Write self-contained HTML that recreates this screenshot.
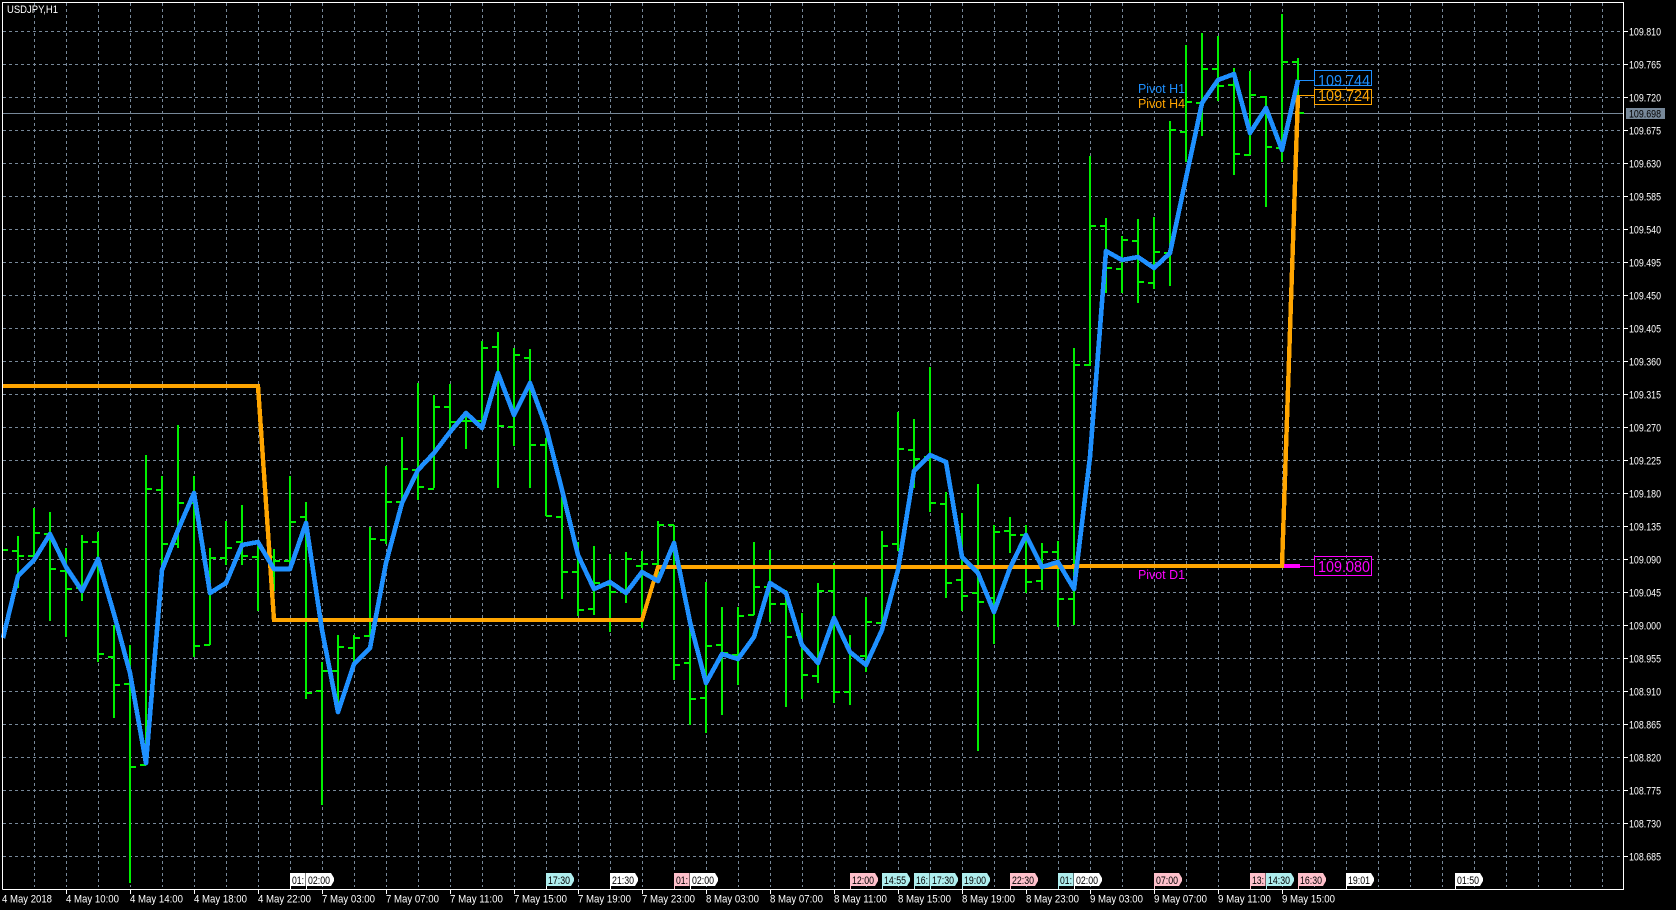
<!DOCTYPE html>
<html><head><meta charset="utf-8"><title>USDJPY,H1</title>
<style>
html,body{margin:0;padding:0;background:#000;width:1676px;height:910px;overflow:hidden}
svg{display:block;position:absolute;left:0;top:0}
text{font-family:"Liberation Sans",sans-serif}
.a{fill:#fff;font-size:11px}
.e{fill:#000;font-size:11px}
</style></head><body>
<svg width="1676" height="910" viewBox="0 0 1676 910" xmlns="http://www.w3.org/2000/svg">
<rect width="1676" height="910" fill="#000"/>
<!-- grid -->
<path fill="none" stroke="#778899" stroke-width="1" stroke-dasharray="3 3" d="M3 31.5H1623M3 64.5H1623M3 97.5H1623M3 130.5H1623M3 163.5H1623M3 196.5H1623M3 229.5H1623M3 262.5H1623M3 295.5H1623M3 328.5H1623M3 361.5H1623M3 394.5H1623M3 427.5H1623M3 460.5H1623M3 493.5H1623M3 526.5H1623M3 559.5H1623M3 592.5H1623M3 625.5H1623M3 658.5H1623M3 691.5H1623M3 724.5H1623M3 757.5H1623M3 790.5H1623M3 823.5H1623M3 856.5H1623"/>
<path fill="none" stroke="#778899" stroke-width="1" stroke-dasharray="3 3" d="M34.5 3V887M66.5 3V887M98.5 3V887M130.5 3V887M162.5 3V887M194.5 3V887M226.5 3V887M258.5 3V887M290.5 3V887M322.5 3V887M354.5 3V887M386.5 3V887M418.5 3V887M450.5 3V887M482.5 3V887M514.5 3V887M546.5 3V887M578.5 3V887M610.5 3V887M642.5 3V887M674.5 3V887M706.5 3V887M738.5 3V887M770.5 3V887M802.5 3V887M834.5 3V887M866.5 3V887M898.5 3V887M930.5 3V887M962.5 3V887M994.5 3V887M1026.5 3V887M1058.5 3V887M1090.5 3V887M1122.5 3V887M1154.5 3V887M1186.5 3V887M1218.5 3V887M1250.5 3V887M1282.5 3V887M1314.5 3V887M1346.5 3V887M1378.5 3V887M1410.5 3V887M1442.5 3V887M1474.5 3V887M1506.5 3V887M1538.5 3V887M1570.5 3V887M1602.5 3V887"/>
<!-- current price line -->
<path shape-rendering="crispEdges" stroke="#778899" stroke-width="1" d="M3 113.5H1623"/>
<!-- bars -->
<path shape-rendering="crispEdges" fill="none" stroke="#00F000" stroke-width="2" d="M3 550H8M18 536V588M12 551H18M18 556H24M34 508V560M28 556H34M34 533H40M50 512V621M44 534H50M50 569H56M66 548V637M60 571H66M66 589H72M82 535V601M76 588H82M82 542H88M98 532V662M92 542H98M98 654H104M114 625V718M108 657H114M114 685H120M130 645V883M124 684H130M130 767H136M146 455V765M140 765H146M146 489H152M162 476V570M156 490H162M162 544H168M178 425V548M172 544H178M178 503H184M194 476V657M188 503H194M194 646H200M210 548V645M204 645H210M210 558H216M226 521V565M220 558H226M226 548H232M242 505V565M236 542H242M242 556H248M258 546V611M252 557H258M258 548H264M274 549V591M268 557H274M274 561H280M290 476V567M284 561H290M290 522H296M306 502V699M300 517H306M306 693H312M322 662V805M316 691H322M322 671H328M338 635V710M332 671H338M338 647H344M354 635V663M348 648H354M354 638H360M370 527V636M364 636H370M370 539H376M386 466V544M380 540H386M386 502H392M402 437V503M396 502H402M402 469H408M418 383V500M412 470H418M418 487H424M434 395V488M428 489H434M434 407H440M450 384V430M444 407H450M450 422H456M466 415V449M460 421H466M466 421H472M482 341V430M476 421H482M482 348H488M498 332V488M492 347H498M498 426H504M514 348V446M508 427H514M514 355H520M530 349V488M524 358H530M530 445H536M546 438V516M540 445H546M546 516H552M562 497V599M556 517H562M562 572H568M578 542V616M572 572H578M578 610H584M594 546V615M588 609H594M594 583H600M610 554V632M604 585H610M610 592H616M626 552V603M620 592H626M626 559H632M642 551V628M636 566H642M642 564H648M658 521V580M652 564H658M658 525H664M674 525V680M668 525H674M674 665H680M690 618V725M684 663H690M690 699H696M706 582V733M700 698H706M706 646H712M722 607V715M716 645H722M722 653H728M738 607V685M732 655H738M738 616H744M754 542V615M748 615H754M754 587H760M770 550V622M764 587H770M770 604H776M786 590V707M780 604H786M786 637H792M802 613V699M796 635H802M802 675H808M818 583V683M812 676H818M818 591H824M834 563V703M828 591H834M834 692H840M850 635V705M844 692H850M850 655H856M866 597V672M860 656H866M866 622H872M882 531V632M876 623H882M882 546H888M898 412V551M892 544H898M898 449H904M914 419V488M908 450H914M914 459H920M930 367V512M924 457H930M930 503H936M946 492V598M940 504H946M946 583H952M962 513V611M956 580H962M962 596H968M978 484V751M972 593H978M978 602H984M994 525V644M988 598H994M994 532H1000M1010 517V553M1004 531H1010M1010 535H1016M1026 525V593M1020 535H1026M1026 582H1032M1042 543V590M1036 581H1042M1042 552H1048M1058 541V627M1052 552H1058M1058 599H1064M1074 348V625M1068 599H1074M1074 365H1080M1090 156V366M1084 365H1090M1090 226H1096M1106 218V293M1100 226H1106M1106 268H1112M1122 236V293M1116 269H1122M1122 240H1128M1138 219V303M1132 241H1138M1138 282H1144M1154 217V289M1148 283H1154M1154 252H1160M1170 121V286M1164 253H1170M1170 130H1176M1186 45V162M1180 132H1186M1186 102H1192M1202 33V136M1196 103H1202M1202 69H1208M1218 36V101M1212 69H1218M1218 86H1224M1234 68V175M1228 85H1234M1234 154H1240M1250 71V155M1244 155H1250M1250 95H1256M1266 96V207M1260 97H1266M1266 147H1272M1282 14V162M1276 148H1282M1282 62H1288M1298 58V113M1292 62H1298M1298 113H1304"/>
<!-- pivot lines -->
<path fill="none" stroke="#FFA500" stroke-width="4" shape-rendering="crispEdges" stroke-linejoin="miter" d="M3 386H258L274 620H642L658 567H1074V566H1282L1298 95"/>
<path fill="none" stroke="#FFA500" stroke-width="4.4" shape-rendering="crispEdges" d="M258 386L274 620M1282 566L1298 95"/>
<path fill="none" stroke="#FF00FF" stroke-width="4" shape-rendering="crispEdges" d="M1284 566H1300"/>
<path fill="none" stroke="#1E90FF" stroke-width="4.6" shape-rendering="crispEdges" stroke-linejoin="round" d="M3 638L18 576L34 560L50 534L66 567L82 591L98 559L114 614L130 673L146 763L162 570L178 530L194 493L210 593L226 583L242 545L258 542L274 569L290 569L306 523L322 630L338 712L354 664L370 648L386 563L402 503L418 470L434 453L450 432L466 413L482 428L498 373L514 415L530 383L546 427L562 490L578 555L594 589L610 582L626 593L642 572L658 581L674 543L690 622L706 683L722 654L738 659L754 637L770 583L786 593L802 645L818 663L834 618L850 652L866 665L882 630L898 570L914 471L930 455L946 462L962 557L978 573L994 612L1010 568L1026 535L1042 567L1058 562L1074 589L1090 457L1106 251L1122 260L1138 257L1154 268L1170 253L1186 178L1202 103L1218 80L1234 74L1250 133L1266 108L1282 150L1298 80"/>
<!-- right-side price tags -->
<path shape-rendering="crispEdges" fill="none" stroke="#1E90FF" d="M1298 80.5H1314M1314.5 70.5H1371.5V85.5H1314.5Z"/>
<path shape-rendering="crispEdges" fill="none" stroke="#FFA500" d="M1298 95.5H1314M1314.5 89.5H1371.5V104.5H1314.5Z"/>
<path shape-rendering="crispEdges" fill="none" stroke="#FF00FF" d="M1300 566.5H1314M1314.5 556.5H1371.5V575.5H1314.5Z"/>
<text x="1318" y="86" font-size="16" fill="#1E90FF" textLength="52" lengthAdjust="spacingAndGlyphs">109.744</text>
<text x="1318" y="101" font-size="16" fill="#FFA500" textLength="52" lengthAdjust="spacingAndGlyphs">109.724</text>
<text x="1318" y="572" font-size="16" fill="#FF00FF" textLength="52" lengthAdjust="spacingAndGlyphs">109.080</text>
<text x="1138" y="93" font-size="13" fill="#1E90FF" textLength="47" lengthAdjust="spacingAndGlyphs">Pivot H1</text>
<text x="1138" y="108" font-size="13" fill="#FFA500" textLength="47" lengthAdjust="spacingAndGlyphs">Pivot H4</text>
<text x="1138" y="579" font-size="13" fill="#FF00FF" textLength="47" lengthAdjust="spacingAndGlyphs">Pivot D1</text>
<!-- frame -->
<path shape-rendering="crispEdges" fill="none" stroke="#fff" stroke-width="1" d="M2.5 889.5V2.5H1623.5V889.5H2.5M1623 31.5H1628M1623 64.5H1628M1623 97.5H1628M1623 130.5H1628M1623 163.5H1628M1623 196.5H1628M1623 229.5H1628M1623 262.5H1628M1623 295.5H1628M1623 328.5H1628M1623 361.5H1628M1623 394.5H1628M1623 427.5H1628M1623 460.5H1628M1623 493.5H1628M1623 526.5H1628M1623 559.5H1628M1623 592.5H1628M1623 625.5H1628M1623 658.5H1628M1623 691.5H1628M1623 724.5H1628M1623 757.5H1628M1623 790.5H1628M1623 823.5H1628M1623 856.5H1628M66.5 889V894M130.5 889V894M194.5 889V894M258.5 889V894M322.5 889V894M386.5 889V894M450.5 889V894M514.5 889V894M578.5 889V894M642.5 889V894M706.5 889V894M770.5 889V894M834.5 889V894M898.5 889V894M962.5 889V894M1026.5 889V894M1090.5 889V894M1154.5 889V894M1218.5 889V894M1282.5 889V894"/>
<text class="a" x="7" y="13" textLength="51" lengthAdjust="spacingAndGlyphs">USDJPY,H1</text>
<!-- price axis -->
<g class="a">
<text x="1629" y="35.500" class="a" textLength="32" lengthAdjust="spacingAndGlyphs">109.810</text>
<text x="1629" y="68.500" class="a" textLength="32" lengthAdjust="spacingAndGlyphs">109.765</text>
<text x="1629" y="101.500" class="a" textLength="32" lengthAdjust="spacingAndGlyphs">109.720</text>
<text x="1629" y="134.500" class="a" textLength="32" lengthAdjust="spacingAndGlyphs">109.675</text>
<text x="1629" y="167.500" class="a" textLength="32" lengthAdjust="spacingAndGlyphs">109.630</text>
<text x="1629" y="200.500" class="a" textLength="32" lengthAdjust="spacingAndGlyphs">109.585</text>
<text x="1629" y="233.500" class="a" textLength="32" lengthAdjust="spacingAndGlyphs">109.540</text>
<text x="1629" y="266.500" class="a" textLength="32" lengthAdjust="spacingAndGlyphs">109.495</text>
<text x="1629" y="299.500" class="a" textLength="32" lengthAdjust="spacingAndGlyphs">109.450</text>
<text x="1629" y="332.500" class="a" textLength="32" lengthAdjust="spacingAndGlyphs">109.405</text>
<text x="1629" y="365.500" class="a" textLength="32" lengthAdjust="spacingAndGlyphs">109.360</text>
<text x="1629" y="398.500" class="a" textLength="32" lengthAdjust="spacingAndGlyphs">109.315</text>
<text x="1629" y="431.500" class="a" textLength="32" lengthAdjust="spacingAndGlyphs">109.270</text>
<text x="1629" y="464.500" class="a" textLength="32" lengthAdjust="spacingAndGlyphs">109.225</text>
<text x="1629" y="497.500" class="a" textLength="32" lengthAdjust="spacingAndGlyphs">109.180</text>
<text x="1629" y="530.500" class="a" textLength="32" lengthAdjust="spacingAndGlyphs">109.135</text>
<text x="1629" y="563.500" class="a" textLength="32" lengthAdjust="spacingAndGlyphs">109.090</text>
<text x="1629" y="596.500" class="a" textLength="32" lengthAdjust="spacingAndGlyphs">109.045</text>
<text x="1629" y="629.500" class="a" textLength="32" lengthAdjust="spacingAndGlyphs">109.000</text>
<text x="1629" y="662.500" class="a" textLength="32" lengthAdjust="spacingAndGlyphs">108.955</text>
<text x="1629" y="695.500" class="a" textLength="32" lengthAdjust="spacingAndGlyphs">108.910</text>
<text x="1629" y="728.500" class="a" textLength="32" lengthAdjust="spacingAndGlyphs">108.865</text>
<text x="1629" y="761.500" class="a" textLength="32" lengthAdjust="spacingAndGlyphs">108.820</text>
<text x="1629" y="794.500" class="a" textLength="32" lengthAdjust="spacingAndGlyphs">108.775</text>
<text x="1629" y="827.500" class="a" textLength="32" lengthAdjust="spacingAndGlyphs">108.730</text>
<text x="1629" y="860.500" class="a" textLength="32" lengthAdjust="spacingAndGlyphs">108.685</text>
</g>
<rect x="1626" y="108" width="39" height="11" fill="#778899"/>
<text x="1629" y="117.500" font-size="11" fill="#000" textLength="32" lengthAdjust="spacingAndGlyphs">109.698</text>
<!-- time axis -->
<text class="a" x="2" y="902.500" textLength="50" lengthAdjust="spacingAndGlyphs">4 May 2018</text>
<text class="a" x="66" y="902.500" textLength="53" lengthAdjust="spacingAndGlyphs">4 May 10:00</text>
<text class="a" x="130" y="902.500" textLength="53" lengthAdjust="spacingAndGlyphs">4 May 14:00</text>
<text class="a" x="194" y="902.500" textLength="53" lengthAdjust="spacingAndGlyphs">4 May 18:00</text>
<text class="a" x="258" y="902.500" textLength="53" lengthAdjust="spacingAndGlyphs">4 May 22:00</text>
<text class="a" x="322" y="902.500" textLength="53" lengthAdjust="spacingAndGlyphs">7 May 03:00</text>
<text class="a" x="386" y="902.500" textLength="53" lengthAdjust="spacingAndGlyphs">7 May 07:00</text>
<text class="a" x="450" y="902.500" textLength="53" lengthAdjust="spacingAndGlyphs">7 May 11:00</text>
<text class="a" x="514" y="902.500" textLength="53" lengthAdjust="spacingAndGlyphs">7 May 15:00</text>
<text class="a" x="578" y="902.500" textLength="53" lengthAdjust="spacingAndGlyphs">7 May 19:00</text>
<text class="a" x="642" y="902.500" textLength="53" lengthAdjust="spacingAndGlyphs">7 May 23:00</text>
<text class="a" x="706" y="902.500" textLength="53" lengthAdjust="spacingAndGlyphs">8 May 03:00</text>
<text class="a" x="770" y="902.500" textLength="53" lengthAdjust="spacingAndGlyphs">8 May 07:00</text>
<text class="a" x="834" y="902.500" textLength="53" lengthAdjust="spacingAndGlyphs">8 May 11:00</text>
<text class="a" x="898" y="902.500" textLength="53" lengthAdjust="spacingAndGlyphs">8 May 15:00</text>
<text class="a" x="962" y="902.500" textLength="53" lengthAdjust="spacingAndGlyphs">8 May 19:00</text>
<text class="a" x="1026" y="902.500" textLength="53" lengthAdjust="spacingAndGlyphs">8 May 23:00</text>
<text class="a" x="1090" y="902.500" textLength="53" lengthAdjust="spacingAndGlyphs">9 May 03:00</text>
<text class="a" x="1154" y="902.500" textLength="53" lengthAdjust="spacingAndGlyphs">9 May 07:00</text>
<text class="a" x="1218" y="902.500" textLength="53" lengthAdjust="spacingAndGlyphs">9 May 11:00</text>
<text class="a" x="1282" y="902.500" textLength="53" lengthAdjust="spacingAndGlyphs">9 May 15:00</text>
<!-- event flags -->
<path fill="#fff" d="M290 873H305.500V886H291V889H290Z"/><text class="e" x="292" y="884" textLength="12" lengthAdjust="spacingAndGlyphs">01:</text>
<path fill="#fff" d="M306 873H331L334 878V881L331 886H307V889H306Z"/><text class="e" x="308" y="884" textLength="22" lengthAdjust="spacingAndGlyphs">02:00</text>
<path fill="#AFEEEE" d="M546 873H571L574 878V881L571 886H547V889H546Z"/><text class="e" x="548" y="884" textLength="22" lengthAdjust="spacingAndGlyphs">17:30</text>
<path fill="#fff" d="M546 886H547V889H546Z"/>
<path fill="#fff" d="M610 873H635L638 878V881L635 886H611V889H610Z"/><text class="e" x="612" y="884" textLength="22" lengthAdjust="spacingAndGlyphs">21:30</text>
<path fill="#FFC0CB" d="M674 873H689.500V886H675V889H674Z"/><text class="e" x="676" y="884" textLength="12" lengthAdjust="spacingAndGlyphs">01:</text>
<path fill="#fff" d="M690 873H715L718 878V881L715 886H691V889H690Z"/><text class="e" x="692" y="884" textLength="22" lengthAdjust="spacingAndGlyphs">02:00</text>
<path fill="#FFC0CB" d="M850 873H875L878 878V881L875 886H851V889H850Z"/><text class="e" x="852" y="884" textLength="22" lengthAdjust="spacingAndGlyphs">12:00</text>
<path fill="#AFEEEE" d="M882 873H907L910 878V881L907 886H883V889H882Z"/><text class="e" x="884" y="884" textLength="22" lengthAdjust="spacingAndGlyphs">14:55</text>
<path fill="#AFEEEE" d="M914 873H929.500V886H915V889H914Z"/><text class="e" x="916" y="884" textLength="12" lengthAdjust="spacingAndGlyphs">16:</text>
<path fill="#AFEEEE" d="M930 873H955L958 878V881L955 886H931V889H930Z"/><text class="e" x="932" y="884" textLength="22" lengthAdjust="spacingAndGlyphs">17:30</text>
<path fill="#AFEEEE" d="M962 873H987L990 878V881L987 886H963V889H962Z"/><text class="e" x="964" y="884" textLength="22" lengthAdjust="spacingAndGlyphs">19:00</text>
<path fill="#FFC0CB" d="M1010 873H1035L1038 878V881L1035 886H1011V889H1010Z"/><text class="e" x="1012" y="884" textLength="22" lengthAdjust="spacingAndGlyphs">22:30</text>
<path fill="#AFEEEE" d="M1058 873H1073.500V886H1059V889H1058Z"/><text class="e" x="1060" y="884" textLength="12" lengthAdjust="spacingAndGlyphs">01:</text>
<path fill="#fff" d="M1074 873H1099L1102 878V881L1099 886H1075V889H1074Z"/><text class="e" x="1076" y="884" textLength="22" lengthAdjust="spacingAndGlyphs">02:00</text>
<path fill="#FFC0CB" d="M1154 873H1179L1182 878V881L1179 886H1155V889H1154Z"/><text class="e" x="1156" y="884" textLength="22" lengthAdjust="spacingAndGlyphs">07:00</text>
<path fill="#FFC0CB" d="M1250 873H1265.500V886H1251V889H1250Z"/><text class="e" x="1252" y="884" textLength="12" lengthAdjust="spacingAndGlyphs">13:</text>
<path fill="#AFEEEE" d="M1266 873H1291L1294 878V881L1291 886H1267V889H1266Z"/><text class="e" x="1268" y="884" textLength="22" lengthAdjust="spacingAndGlyphs">14:30</text>
<path fill="#FFC0CB" d="M1298 873H1323L1326 878V881L1323 886H1299V889H1298Z"/><text class="e" x="1300" y="884" textLength="22" lengthAdjust="spacingAndGlyphs">16:30</text>
<path fill="#fff" d="M1346 873H1371L1374 878V881L1371 886H1347V889H1346Z"/><text class="e" x="1348" y="884" textLength="22" lengthAdjust="spacingAndGlyphs">19:01</text>
<path fill="#fff" d="M1455 873H1480L1483 878V881L1480 886H1456V889H1455Z"/><text class="e" x="1457" y="884" textLength="22" lengthAdjust="spacingAndGlyphs">01:50</text>
</svg>
</body></html>
